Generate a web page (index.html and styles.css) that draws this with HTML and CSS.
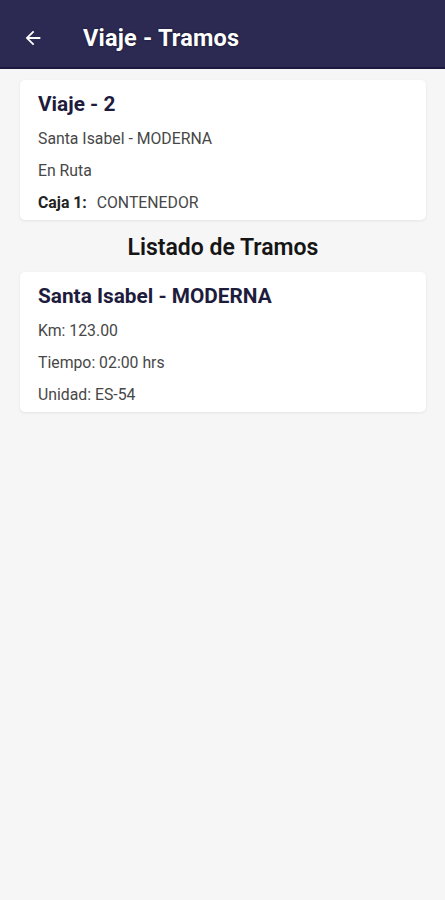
FILE: index.html
```html
<!doctype html>
<html lang="es">

<head>
    <meta charset="UTF-8">
    <meta name="viewport" content="width=device-width, initial-scale=1.0">
    <title>Viaje - Tramos</title>
    <link rel="stylesheet" href="styles.css">
</head>

<body>
    <header class="topbar">
        <button class="back" aria-label="Volver">
            <svg width="22" height="22" viewBox="0 0 24 24">
                <path d="M20 11H7.83l5.59-5.59L12 4l-8 8 8 8 1.41-1.41L7.83 13H20v-2z" fill="#fff" />
            </svg>
        </button>
        <h1 class="topbar-title">Viaje - Tramos</h1>
    </header>

    <main class="content">
        <section class="card">
            <h2 class="card-title">Viaje - 2</h2>
            <p class="row">Santa Isabel - MODERNA</p>
            <p class="row">En Ruta</p>
            <p class="row"><b class="label">Caja 1:</b> CONTENEDOR</p>
        </section>

        <h3 class="section-title">Listado de Tramos</h3>

        <section class="card">
            <h2 class="card-title">Santa Isabel - MODERNA</h2>
            <p class="row">Km: 123.00</p>
            <p class="row">Tiempo: 02:00 hrs</p>
            <p class="row">Unidad: ES-54</p>
        </section>
    </main>
</body>

</html>
```

FILE: styles.css
```css
* {
    margin: 0;
    padding: 0;
    box-sizing: border-box;
}

body {
    background: #f6f6f7;
    font-family: Roboto, "Liberation Sans", sans-serif;
    color: #3a3a3a;
    min-height: 900px;
}

.topbar {
    height: 69px;
    background: #2c2952;
    border-bottom: 2px solid #1b1940;
    display: flex;
    align-items: center;
    padding: 8px 0 0 21px;
}

.back {
    background: none;
    border: 0;
    width: 24px;
    height: 24px;
    display: flex;
    align-items: center;
    justify-content: center;
}

.topbar-title {
    margin-left: 38px;
    color: #fff;
    font-size: 23.5px;
    font-weight: 700;
    letter-spacing: 0.2px;
    text-shadow: 0 0 2px rgba(0, 0, 0, .6);
}

.content {
    padding: 11px 19px 0 20px;
    display: flex;
    flex-direction: column;
}

.card {
    background: #fff;
    border-radius: 5px;
    box-shadow: 0 1px 3px rgba(0, 0, 0, .08);
    padding: 10px 18px 1px;
}

.card-title {
    font-size: 20.8px;
    line-height: 28px;
    font-weight: 700;
    color: #1e1c3d;
    margin-bottom: 5px;
}

.row {
    font-size: 15.8px;
    line-height: 32px;
    font-weight: 400;
    color: #474747;
}

.label {
    font-weight: 700;
    color: #222;
    margin-right: 6px;
}

.section-title {
    text-align: center;
    font-size: 23px;
    line-height: 30px;
    font-weight: 600;
    color: #151515;
    margin: 13px 0 9px;
}
```
